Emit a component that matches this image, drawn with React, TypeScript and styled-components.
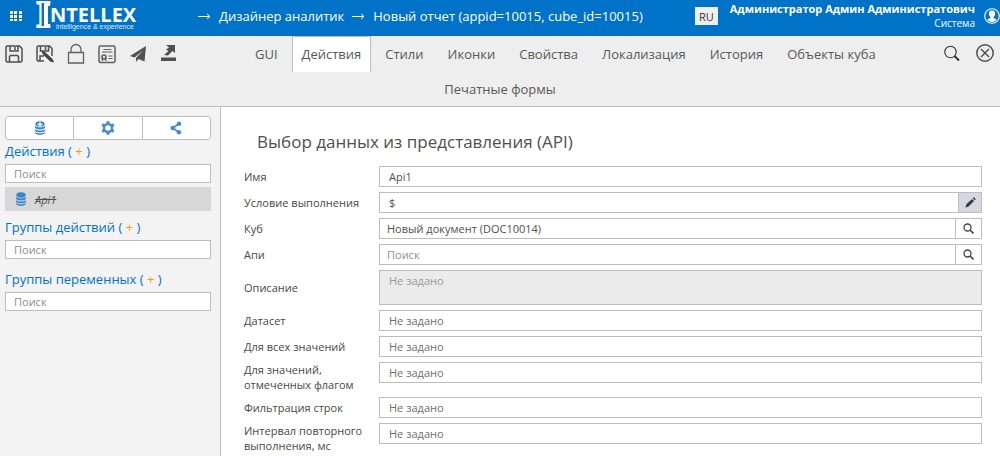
import React from "react";
import styled, { createGlobalStyle } from "styled-components";

const GlobalStyle = createGlobalStyle`
  * { box-sizing: border-box; }
  body {
    margin: 0;
    background: #fff;
    color: #505050;
    font-family: "Open Sans", "Noto Sans", sans-serif;
    font-size: 11px;
    overflow: hidden;
  }
  button, input, textarea { font: inherit; color: inherit; }
  button { padding: 0; border: 0; background: none; cursor: pointer; }
  svg { display: block; overflow: visible; }
`;

const line = "#bdbdbd";

const Header = styled.header`
  display: flex;
  align-items: center;
  height: 36px;
  padding-left: 10px;
  background: #0072c8;
  color: #fff;
`;

const MenuButton = styled.button`
  padding-bottom: 4px;
`;

const Logo = styled.a`
  margin-left: 13px;
  text-decoration: none;
`;

const Crumbs = styled.nav`
  display: flex;
  align-items: center;
  flex: 1;
  gap: 8px;
  margin-left: 59px;
  padding-bottom: 4px;
  font-size: 13px;
  white-space: nowrap;

  a { color: inherit; text-decoration: none; }
`;

const LangButton = styled.button`
  width: 23px;
  height: 18px;
  margin-bottom: 4px;
  background: #f0f0f0;
  color: #333;
`;

const User = styled.div`
  margin: 0 9px 0 12px;
  padding-bottom: 5px;
  text-align: right;
  line-height: 15px;
  font-size: 10px;
  white-space: nowrap;

  strong { display: block; font-size: 11px; }
`;

const Avatar = styled.button`
  margin-bottom: 4px;
`;

const Toolbar = styled.div`
  height: 71px;
  background: #eee;
  border-bottom: 1px solid ${line};
`;

const ToolbarRow = styled.div`
  display: flex;
  justify-content: center;
  height: 35px;
`;

const Tools = styled.div`
  display: flex;
  align-items: center;
  gap: 7px;
  width: 245px;
  padding-left: 2px;
`;

const ToolButton = styled.button`
  display: grid;
  place-items: center;
  width: 24px;
  height: 36px;
`;

const Tabs = styled.nav`
  display: flex;
  flex: 1;
  gap: 4px;
`;

const Tab = styled.a<{ $active?: boolean }>`
  height: 36px;
  padding: 0 9px;
  border: 1px solid ${(p) => (p.$active ? line : "transparent")};
  border-bottom: 0;
  background: ${(p) => (p.$active ? "#fff" : "transparent")};
  color: #585858;
  font-size: 13px;
  line-height: 35px;
  text-decoration: none;
  white-space: nowrap;
`;

const Actions = styled.div`
  display: flex;
  gap: 9px;
  padding-right: 3px;
`;

const Body = styled.div`
  display: flex;
`;

const Sidebar = styled.aside`
  width: 221px;
  flex: none;
  min-height: calc(100vh - 107px);
  padding: 9px 9px 0 5px;
  border-right: 1px solid ${line};
  background: #f3f3f3;
`;

const Segments = styled.div`
  display: flex;
  height: 24px;
  border: 1px solid ${line};
  border-radius: 3px;
  background: #fff;
`;

const Segment = styled.button`
  display: grid;
  place-items: center;
  flex: 1;

  & + & { border-left: 1px solid ${line}; }
`;

const Group = styled.section`
  margin-bottom: 5px;
`;

const GroupTitle = styled.h2`
  margin: 0;
  padding-bottom: 2px;
  color: #0072c8;
  font-size: 13px;
  font-weight: 400;
  line-height: 22px;
`;

const AddButton = styled.button`
  color: #ff9c00;
`;

const SearchInput = styled.input`
  display: block;
  width: 100%;
  height: 19px;
  padding: 0 8px;
  border: 1px solid ${line};
  background: #fff;

  &::placeholder { color: #8d8d8d; opacity: 1; }
  &:last-child { margin-bottom: 9px; }
`;

const ListItem = styled.button`
  display: flex;
  align-items: center;
  gap: 8px;
  width: 100%;
  height: 24px;
  margin-top: 4px;
  padding: 0 10px;
  background: #d7d7d7;
  font-style: italic;
  text-decoration: line-through;
`;

const Content = styled.main`
  flex: 1;
  min-width: 0;
  padding: 23px 18px 0 23px;
`;

const Title = styled.h1`
  margin: 0 0 12px 13px;
  color: #505050;
  font-size: 17px;
  font-weight: 400;
  line-height: 24px;
`;

const Form = styled.form`
  display: flex;
  flex-direction: column;
  gap: 5px;
`;

const Row = styled.div`
  display: flex;
`;

const Label = styled.label<{ $center?: boolean }>`
  width: 135px;
  flex: none;
  align-self: ${(p) => (p.$center ? "center" : "flex-start")};
  padding-top: ${(p) => (p.$center ? 0 : 3)}px;
  color: #484848;
  line-height: 15px;
`;

const Field = styled.div`
  display: flex;
  flex: 1;
  min-width: 0;
  height: 21px;
  border: 1px solid ${line};
`;

const FieldInput = styled.input<{ $tight?: boolean }>`
  flex: 1;
  min-width: 0;
  padding: 0 ${(p) => (p.$tight ? 7 : 9)}px;
  border: 0;
  background: #fff;

  &::placeholder { color: ${(p) => (p.$tight ? "#929292" : "#6e6e6e")}; opacity: 1; }
`;

const FieldButton = styled.button<{ $filled?: boolean }>`
  display: grid;
  place-items: center;
  width: ${(p) => (p.$filled ? 23 : 26)}px;
  border-left: 1px solid ${line};
  background: ${(p) => (p.$filled ? "#d5d8e2" : "#fff")};
`;

const Description = styled.textarea`
  flex: 1;
  min-width: 0;
  height: 35px;
  padding: 2px 9px;
  border: 1px solid ${line};
  background: #ebebeb;
  line-height: 15px;
  resize: none;

  &::placeholder { color: #9a9a9a; opacity: 1; }
`;

const TallLabel = styled(Label)`
  padding-top: 0;
`;

const GridIcon = () => (
  <svg width="12" height="10" fill="#fff">
    {[0, 4, 8].map((y) =>
      [0, 4, 9].map((x) => <rect key={`${x}-${y}`} x={x} y={y} width="3" height={y === 8 ? 2 : 3} />)
    )}
  </svg>
);

const LogoMark = () => (
  <svg width="104" height="36" fill="#fff">
    <text x="1" y="27" fontFamily="Liberation Serif, serif" fontWeight="700" fontSize="37" fill="#0072c8" stroke="#fff" strokeWidth="2">I</text>
    <path d="M9 2h6v4h-2v18h2v4H9z" />
    <text x="15" y="22" fontFamily="Open Sans, sans-serif" fontWeight="700" fontSize="20">NTELLEX</text>
    <text x="21" y="29" fontFamily="Liberation Sans, sans-serif" fontSize="7" opacity="0.85">intelligence &amp; experience</text>
  </svg>
);

const Arrow = () => (
  <svg width="13" height="8" fill="none" stroke="#fff">
    <path d="M0 4.500h12M9 2l3 2.500-3 2.500" />
  </svg>
);

const AvatarIcon = () => (
  <svg width="16" height="16" viewBox="0 0 16 16">
    <circle cx="8" cy="8" r="7.300" fill="none" stroke="#fff" strokeWidth="1.100" />
    <path d="M8 2.500c2.200 0 3.200 1.300 3.200 3 0 1.500-.6 2.700-1.600 3.300v1.200l3.200 1.400c-1.200 1.600-2.800 2.500-4.800 2.500s-3.600-.9-4.800-2.500l3.200-1.400V8.800c-1-.6-1.600-1.800-1.600-3.300 0-1.700 1-3 3.200-3z" fill="#fff" />
  </svg>
);

const SaveIcon = () => (
  <svg width="18" height="18" fill="none" stroke="#505050" strokeWidth="1.500">
    <path d="M2 1h12.500L17 3.500V16l-1 1H2l-1-1V2zM5 1v5h8V1M10 2v3M4.500 17v-5.500l1-1h7l1 1V17" />
  </svg>
);

const SaveEditIcon = () => (
  <svg width="18" height="18" fill="none" stroke="#505050" strokeWidth="1.500">
    <path d="M8 16H2l-1-1V2l1-1h11.500L16 3.500V11M4.500 1v5h8V1M9.500 2v3M4 16v-5h4" />
    <path d="M6 6.500l3 1 7 6.500 1.500 3-3.300-1L7.500 9.500z" fill="#454545" stroke="#454545" strokeWidth="1" />
  </svg>
);

const LockIcon = () => (
  <svg width="18" height="20" fill="none" stroke="#606060" strokeWidth="1.300">
    <path d="M1.500 8.500h15v10.500h-15zM4 8V5.500a5 5 0 0 1 10 0V8" />
  </svg>
);

const CertificateIcon = () => (
  <svg width="18" height="18" fill="none" stroke="#606060" strokeWidth="1.200">
    <rect x="1" y="1" width="16" height="16.500" rx="1.500" strokeWidth="1.500" />
    <path d="M5.500 4.500h8M4 7h10.500M10.500 11h4M10.500 13.500h4" />
    <circle cx="6" cy="12" r="2" strokeWidth="1.700" />
    <path d="M4.300 13.500v2.500M7.700 13.500v2.500" />
  </svg>
);

const SendIcon = () => (
  <svg width="18" height="18" fill="#505050">
    <path d="M17 1L1 11l4.500 1.500L14.500 5 7 13v4l2.500-3 6 2.500z" />
  </svg>
);

const ExportIcon = () => (
  <svg width="16" height="17" fill="#505050">
    <path d="M0 12.500h15V16H0zM5 0h9v8l-2.500-2L7 10.500 3 10l4.500-4L5 4.500 8 2.500z" />
  </svg>
);

const BigSearchIcon = () => (
  <svg width="18" height="18" fill="none" stroke="#333">
    <circle cx="7.500" cy="7" r="5.700" strokeWidth="1.100" />
    <path d="M11.500 11l4.500 4.500" strokeWidth="2" />
  </svg>
);

const CloseIcon = () => (
  <svg width="20" height="20" fill="none" stroke="#505050" strokeWidth="1.500">
    <circle cx="10" cy="9" r="8.200" />
    <path d="M6 5l8 8M14 5l-8 8" />
  </svg>
);

const DatabaseIcon = ({ plus }: { plus?: boolean }) => (
  <svg width="12" height="14" fill="#3584cf">
    <ellipse cx="6" cy="3" rx="4.700" ry="2.700" />
    <path d="M1 4.800C2.500 7 9.500 7 11 4.800v2C9.500 9 2.500 9 1 6.800zM1 8c1.500 2 8.500 2 10 0v1.700c-1.500 2.200-8.500 2.200-10 0zM1 11c1.500 1.700 8.500 1.700 10 0v.7c-1 2.800-9 2.800-10 0z" />
    {plus && <path d="M6 1v5M3.500 3.500h5" stroke="#fff" strokeWidth="1.300" />}
  </svg>
);

const GearIcon = () => (
  <svg width="14" height="14" fill="none" stroke="#428bca">
    <circle cx="7" cy="7" r="4" strokeWidth="2.400" />
    <path d="M7 .3v2.200M7 11.500v2.200M1.200 3.600l1.900 1.100M10.900 9.300l1.900 1.100M1.200 10.400l1.900-1.100M10.900 4.700l1.900-1.100" strokeWidth="3" />
  </svg>
);

const ShareIcon = () => (
  <svg width="12" height="14" fill="#428bca">
    <path d="M9 2.500L3 7l6 4.500" fill="none" stroke="#428bca" strokeWidth="1.600" />
    <circle cx="9" cy="2.700" r="2.200" />
    <circle cx="2.700" cy="7" r="2.200" />
    <circle cx="9" cy="11.300" r="2.200" />
  </svg>
);

const PencilIcon = () => (
  <svg width="11" height="11" fill="#333b4a">
    <path d="M.5 10.500l.7-3L7 2l2 2-5.700 5.700zM7.700 1.300L9 .2l1.800 1.700-1.100 1.300z" />
  </svg>
);

const SmallSearchIcon = () => (
  <svg width="11" height="11" fill="none" stroke="#444">
    <circle cx="4.500" cy="4.500" r="3.500" strokeWidth="1.300" />
    <path d="M7 7l3.500 3.300" strokeWidth="1.600" />
  </svg>
);

const tools = [
  { label: "Сохранить", icon: <SaveIcon /> },
  { label: "Сохранить как", icon: <SaveEditIcon /> },
  { label: "Заблокировать", icon: <LockIcon /> },
  { label: "Сертификат", icon: <CertificateIcon /> },
  { label: "Отправить", icon: <SendIcon /> },
  { label: "Экспорт", icon: <ExportIcon /> },
];

const tabs = ["GUI", "Действия", "Стили", "Иконки", "Свойства", "Локализация", "История", "Объекты куба"];

function SideGroup({ title, children }: { title: string; children?: React.ReactNode }) {
  return (
    <Group>
      <GroupTitle>
        {title} ( <AddButton aria-label="Добавить">+</AddButton> )
      </GroupTitle>
      <SearchInput placeholder="Поиск" aria-label={title} />
      {children}
    </Group>
  );
}

type FormRowProps = {
  id: string;
  label: string;
  value?: string;
  placeholder?: string;
  action?: "edit" | "search";
  tall?: boolean;
};

function FormRow({ id, label, value, placeholder = "Не задано", action, tall }: FormRowProps) {
  const Caption = tall ? TallLabel : Label;
  return (
    <Row>
      <Caption htmlFor={id}>{label}</Caption>
      <Field>
        <FieldInput id={id} defaultValue={value} placeholder={placeholder} $tight={action === "search"} />
        {action && (
          <FieldButton type="button" $filled={action === "edit"} aria-label={label}>
            {action === "edit" ? <PencilIcon /> : <SmallSearchIcon />}
          </FieldButton>
        )}
      </Field>
    </Row>
  );
}

export default function App() {
  return (
    <>
      <GlobalStyle />
      <Header>
        <MenuButton aria-label="Меню"><GridIcon /></MenuButton>
        <Logo href="#" aria-label="Intellex"><LogoMark /></Logo>
        <Crumbs>
          <Arrow />
          <a href="#">Дизайнер аналитик</a>
          <Arrow />
          <a href="#">Новый отчет (appid=10015, cube_id=10015)</a>
        </Crumbs>
        <LangButton>RU</LangButton>
        <User>
          <strong>Администратор Админ Администратович</strong>
          Система
        </User>
        <Avatar aria-label="Профиль"><AvatarIcon /></Avatar>
      </Header>
      <Toolbar>
        <ToolbarRow>
          <Tools>
            {tools.map((t) => (
              <ToolButton key={t.label} aria-label={t.label}>{t.icon}</ToolButton>
            ))}
          </Tools>
          <Tabs>
            {tabs.map((t) => (
              <Tab key={t} href="#" $active={t === "Действия"}>{t}</Tab>
            ))}
          </Tabs>
          <Actions>
            <ToolButton aria-label="Найти"><BigSearchIcon /></ToolButton>
            <ToolButton aria-label="Закрыть"><CloseIcon /></ToolButton>
          </Actions>
        </ToolbarRow>
        <ToolbarRow>
          <Tab href="#">Печатные формы</Tab>
        </ToolbarRow>
      </Toolbar>
      <Body>
        <Sidebar>
          <Segments>
            <Segment aria-label="Добавить данные"><DatabaseIcon plus /></Segment>
            <Segment aria-label="Настройки"><GearIcon /></Segment>
            <Segment aria-label="Связи"><ShareIcon /></Segment>
          </Segments>
          <SideGroup title="Действия">
            <ListItem><DatabaseIcon />Api1</ListItem>
          </SideGroup>
          <SideGroup title="Группы действий" />
          <SideGroup title="Группы переменных" />
        </Sidebar>
        <Content>
          <Title>Выбор данных из представления (API)</Title>
          <Form>
            <FormRow id="name" label="Имя" value="Api1" />
            <FormRow id="condition" label="Условие выполнения" value="$" action="edit" />
            <FormRow id="cube" label="Куб" value="Новый документ (DOC10014)" action="search" />
            <FormRow id="api" label="Апи" placeholder="Поиск" action="search" />
            <Row>
              <Label htmlFor="description" $center>Описание</Label>
              <Description id="description" placeholder="Не задано" />
            </Row>
            <FormRow id="dataset" label="Датасет" />
            <FormRow id="all" label="Для всех значений" />
            <FormRow id="flagged" label="Для значений, отмеченных флагом" tall />
            <FormRow id="filter" label="Фильтрация строк" />
            <FormRow id="interval" label="Интервал повторного выполнения, мс" tall />
          </Form>
        </Content>
      </Body>
    </>
  );
}
